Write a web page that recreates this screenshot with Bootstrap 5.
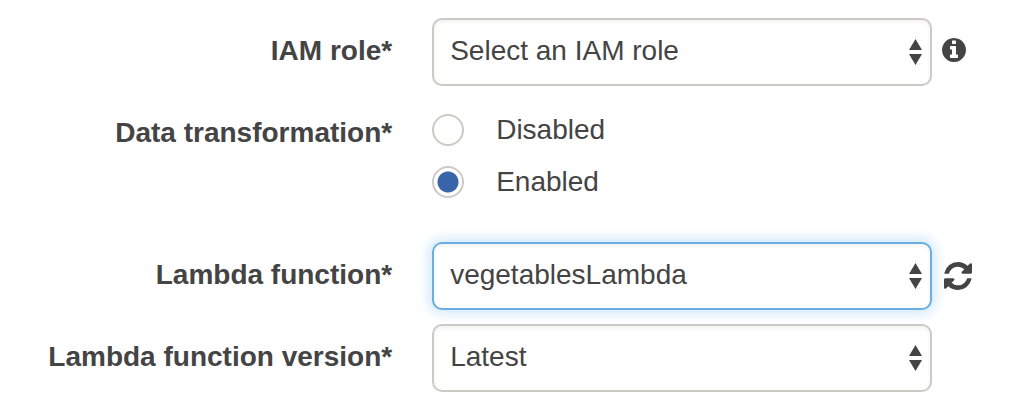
<!DOCTYPE html>
<html lang="en">
<head>
<meta charset="utf-8">
<meta name="viewport" content="width=device-width, initial-scale=1">
<title>Delivery stream settings</title>
<link href="https://cdn.jsdelivr.net/npm/bootstrap@5.3.0/dist/css/bootstrap.min.css" rel="stylesheet">
<style>
  body { font-family: "Liberation Sans", Arial, sans-serif; font-size: 28px; line-height: 32px; color: #444; background: #fff; }
  .settings { padding-top: 18px; }
  .setting { margin-bottom: 14px; }
  .setting-label { padding: 17px 32px 19px 0; font-weight: 700; }
  .setting-select {
    max-width: 500px; height: 68px; padding: 15px 40px 17px 16px;
    font-size: 28px; line-height: 32px; color: #444;
    border: 2px solid #cccac5; border-radius: 10px;
    background-image: url("data:image/svg+xml,%3Csvg xmlns='http://www.w3.org/2000/svg' viewBox='0 0 13 26'%3E%3Cpath fill='%23444' d='M6.5 0 13 11H0zM0 15h13L6.5 26z'/%3E%3C/svg%3E");
    background-size: 13px 26px; background-position: right 8px center;
    box-shadow: inset 0 2px 4px rgba(0, 0, 0, .06);
  }
  .setting-select.active, .setting-select:focus {
    border-color: #6aaee4;
    box-shadow: inset 0 2px 4px rgba(0, 0, 0, .05), 0 0 12px 4px #d3eafc;
  }
  .setting-field { gap: 12px; }
  .setting-field-info { gap: 10px; }
  .icon-button { color: #444; line-height: 0; }
  .choices { padding-top: 4px; margin-bottom: 20px; }
  .choice { min-height: 52px; }
  .choice .form-check-input { width: 32px; height: 32px; border: 2px solid #cccac5; background-color: #fff; }
  .choice .form-check-input:checked {
    border-color: #cccac5;
    background-image: radial-gradient(circle, #3864aa 10px, #fff 11px);
    background-size: 32px 32px; background-position: center;
  }
</style>
</head>
<body>
<form class="settings container-fluid px-0">
  <div class="setting row g-0">
    <label class="setting-label col-5 text-end" for="role">IAM role*</label>
    <div class="setting-field-info col-7 ps-2 d-flex align-items-center">
      <select class="form-select setting-select" id="role"><option>Select an IAM role</option></select>
      <button type="button" class="icon-button btn border-0 p-0 mb-1" aria-label="About IAM roles">
        <svg width="24" height="24" viewBox="128 128 1536 1536" fill="currentColor" aria-hidden="true"><path d="M1152 1376v-160q0-14-9-23t-23-9h-96v-512q0-14-9-23t-23-9h-320q-14 0-23 9t-9 23v160q0 14 9 23t23 9h96v320h-96q-14 0-23 9t-9 23v160q0 14 9 23t23 9h448q14 0 23-9t9-23zm-128-896v-160q0-14-9-23t-23-9h-192q-14 0-23 9t-9 23v160q0 14 9 23t23 9h192q14 0 23-9t9-23zm640 416q0 209-103 385.5t-279.5 279.5-385.5 103-385.5-103-279.5-279.5-103-385.5 103-385.5 279.5-279.5 385.5-103 385.5 103 279.5 279.5 103 385.5z"/></svg>
      </button>
    </div>
  </div>
  <div class="setting row g-0" role="radiogroup" aria-labelledby="transform-label">
    <div class="setting-label col-5 text-end" id="transform-label">Data transformation*</div>
    <div class="choices col-7 ps-2">
      <div class="choice d-flex align-items-center">
        <input class="form-check-input m-0" type="radio" name="transform" id="disabled">
        <label class="ps-3 ms-3" for="disabled">Disabled</label>
      </div>
      <div class="choice d-flex align-items-center">
        <input class="form-check-input m-0" type="radio" name="transform" id="enabled" checked>
        <label class="ps-3 ms-3" for="enabled">Enabled</label>
      </div>
    </div>
  </div>
  <div class="setting row g-0">
    <label class="setting-label col-5 text-end" for="function">Lambda function*</label>
    <div class="setting-field col-7 ps-2 d-flex align-items-center">
      <select class="form-select setting-select active" id="function"><option>vegetablesLambda</option></select>
      <button type="button" class="icon-button btn border-0 p-0" aria-label="Refresh functions">
        <svg width="28" height="28" viewBox="128 128 1536 1536" fill="currentColor" aria-hidden="true"><path d="M1639 1056q0 5-1 7-64 268-268 434.5t-478 166.5q-146 0-282.5-55t-243.5-157l-129 129q-19 19-45 19t-45-19-19-45v-448q0-26 19-45t45-19h448q26 0 45 19t19 45-19 45l-137 137q71 66 161 102t187 36q134 0 250-65t186-179q11-17 53-117 8-23 30-23h192q13 0 22.5 9.5t9.5 22.5zm25-800v448q0 26-19 45t-45 19h-448q-26 0-45-19t-19-45 19-45l138-138q-148-137-349-137-134 0-250 65t-186 179q-11 17-53 117-8 23-30 23h-199q-13 0-22.5-9.5t-9.5-22.5v-7q65-268 270-434.5t480-166.5q146 0 284 55.5t245 156.5l130-129q19-19 45-19t45 19 19 45z"/></svg>
      </button>
    </div>
  </div>
  <div class="setting row g-0">
    <label class="setting-label col-5 text-end" for="version">Lambda function version*</label>
    <div class="setting-field col-7 ps-2 d-flex align-items-center">
      <select class="form-select setting-select" id="version"><option>Latest</option></select>
    </div>
  </div>
</form>
<script src="https://cdn.jsdelivr.net/npm/bootstrap@5.3.0/dist/js/bootstrap.bundle.min.js"></script>
</body>
</html>
